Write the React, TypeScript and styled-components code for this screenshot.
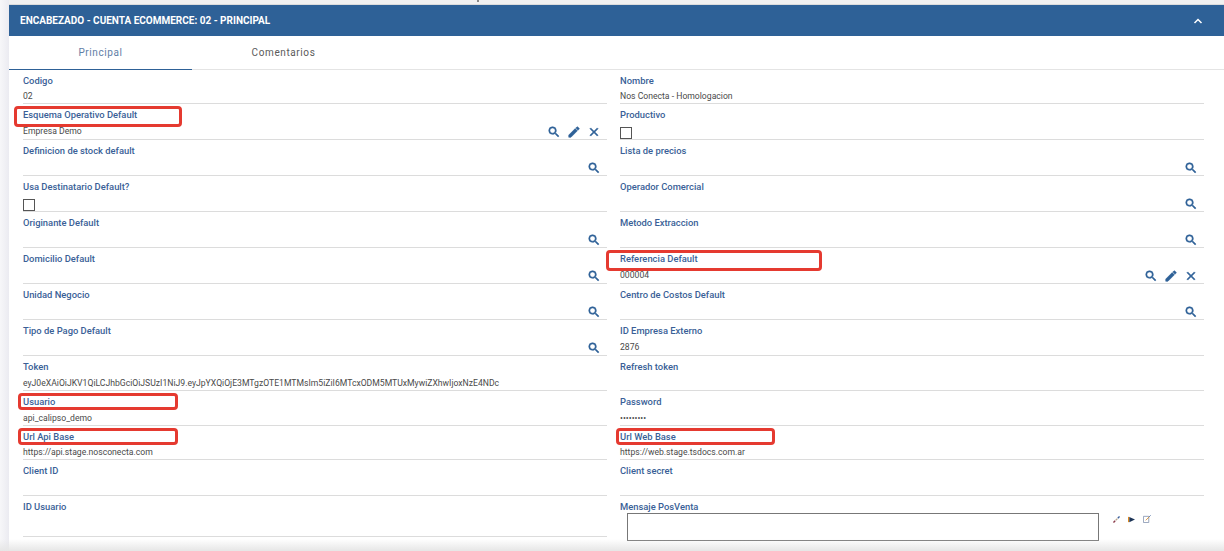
import styled, { createGlobalStyle } from "styled-components";

const GlobalStyle = createGlobalStyle`
  html, body {
    margin: 0;
    height: 100%;
    overflow: hidden;
    background: #f3f3f6;
    font-family: Roboto, "Liberation Sans", sans-serif;
  }
`;

const SEARCH =
  "M15.5 14h-.79l-.28-.27A6.471 6.471 0 0 0 16 9.5 6.5 6.5 0 1 0 9.5 16c1.61 0 3.09-.59 4.23-1.57l.27.28v.79l5 4.99L20.49 19l-4.99-5zm-6 0C7.01 14 5 11.99 5 9.5S7.01 5 9.5 5 14 7.01 14 9.5 11.99 14 9.5 14z";
const EDIT =
  "M3 17.25V21h3.75L17.81 9.94l-3.75-3.75L3 17.25zM20.71 7.04a1 1 0 0 0 0-1.41l-2.34-2.34a1 1 0 0 0-1.41 0l-1.83 1.83 3.75 3.75 1.83-1.83z";
const CLOSE =
  "M19 6.41L17.59 5 12 10.59 6.41 5 5 6.41 10.59 12 5 17.59 6.41 19 12 13.41 17.59 19 19 17.59 13.41 12 19 6.41z";

const Page = styled.div`
  height: 551px;
  padding: 5px 0 0 9px;
  box-sizing: border-box;
  overflow: hidden;
  position: relative;
  background: linear-gradient(90deg, #f7f7f9, #ebebf1 9px, #f1f1f1 9px);
`;

const Tick = styled.span`
  position: absolute;
  left: 477px;
  top: 0;
  width: 2px;
  height: 2px;
  background: #888;
`;

const Panel = styled.section`
  background: #fff;
  height: 100%;
`;

const Header = styled.header`
  height: 31px;
  padding: 0 20px 0 11px;
  background: #2e6197;
  color: #fff;
  display: flex;
  align-items: center;
  justify-content: space-between;
  font-size: 10px;
  font-weight: 700;
  box-shadow: 0 -1px 0 #dcdcdc;
`;

const Tabs = styled.nav`
  display: flex;
  height: 33px;
  border-bottom: 1px solid #e4e4e4;
`;

const Tab = styled.div<{ $active?: boolean }>`
  width: 183px;
  display: flex;
  align-items: center;
  justify-content: center;
  font-size: 10px;
  letter-spacing: 0.6px;
  color: ${(p) => (p.$active ? "#5f7ea6" : "#5a5a5a")};
  box-shadow: ${(p) => (p.$active ? "0 1px 0 #2e6197" : "none")};
`;

const FormGrid = styled.div`
  display: grid;
  grid-template-columns: 584px 584px;
  column-gap: 13px;
  padding-left: 14px;
  grid-template-rows: 34px repeat(7, 36px) 35px 35px 34px 36px 41px;
`;

const Field = styled.div<{ $plain?: boolean }>`
  border-bottom: ${(p) => (p.$plain ? "none" : "1px solid #dcdcdc")};
  box-sizing: border-box;
  padding-top: 5px;
  display: flex;
  flex-direction: column;
  min-width: 0;
`;

const Label = styled.label`
  font-size: 9.4px;
  line-height: 12px;
  font-weight: 500;
  color: #3a5f97;
  position: relative;
  display: block;
`;

const Highlight = styled.span<{ $left: number; $width: number; $height: number }>`
  position: absolute;
  left: ${(p) => p.$left}px;
  top: -3px;
  width: ${(p) => p.$width}px;
  height: ${(p) => p.$height}px;
  border: 3px solid #e53a30;
  border-radius: 4px;
  box-sizing: border-box;
`;

const ValueRow = styled.div`
  display: flex;
  align-items: center;
  justify-content: space-between;
  height: 16px;
  margin-top: 2px;
  font-size: 8.65px;
  color: #4a4a4a;
  white-space: nowrap;
`;

const IconGroup = styled.div`
  display: flex;
  align-items: center;
  gap: 6px;
  margin-left: auto;
  margin-right: 6px;
  padding-top: 1px;
`;

const Check = styled.span`
  width: 12px;
  height: 12px;
  border: 1.5px solid #555;
  box-sizing: border-box;
  display: block;
  margin-top: 6px;
`;

const MessageRow = styled.div`
  display: flex;
  align-items: flex-start;
  margin-left: 7px;
`;

const MessageBox = styled.div`
  width: 472px;
  height: 28px;
  border: 1px solid #777;
  box-sizing: border-box;
`;

const Tools = styled.div`
  display: flex;
  align-items: center;
  gap: 8px;
  margin: 2px 0 0 14px;
`;

const BottomFade = styled.div`
  position: absolute;
  left: 0;
  right: 0;
  bottom: 0;
  height: 12px;
  background: linear-gradient(rgba(232, 232, 232, 0), #e6e6e6);
`;

function Icon({ d, size = 14 }: { d: string; size?: number }) {
  return (
    <svg width={size} height={size} viewBox="0 0 24 24" fill="#2e6197" stroke="#2e6197" strokeWidth={1}>
      <path d={d} />
    </svg>
  );
}

type Item = {
  label: string;
  value?: string;
  check?: boolean;
  search?: boolean;
  actions?: boolean;
  mark?: [number, number, number];
};

const rows: Item[][] = [
  [{ label: "Codigo", value: "02" }, { label: "Nombre", value: "Nos Conecta - Homologacion" }],
  [
    { label: "Esquema Operativo Default", value: "Empresa Demo", actions: true, mark: [-9, 168, 21] },
    { label: "Productivo", check: true },
  ],
  [{ label: "Definicion de stock default", search: true }, { label: "Lista de precios", search: true }],
  [{ label: "Usa Destinatario Default?", check: true }, { label: "Operador Comercial", search: true }],
  [{ label: "Originante Default", search: true }, { label: "Metodo Extraccion", search: true }],
  [
    { label: "Domicilio Default", search: true },
    { label: "Referencia Default", value: "000004", actions: true, mark: [-14, 216, 21] },
  ],
  [{ label: "Unidad Negocio", search: true }, { label: "Centro de Costos Default", search: true }],
  [{ label: "Tipo de Pago Default", search: true }, { label: "ID Empresa Externo", value: "2876" }],
  [
    { label: "Token", value: "eyJ0eXAiOiJKV1QiLCJhbGciOiJSUzI1NiJ9.eyJpYXQiOjE3MTgzOTE1MTMsIm5iZiI6MTcxODM5MTUxMywiZXhwIjoxNzE4NDc" },
    { label: "Refresh token" },
  ],
  [
    { label: "Usuario", value: "api_calipso_demo", mark: [-5, 160, 17] },
    { label: "Password", value: "\u2022\u2022\u2022\u2022\u2022\u2022\u2022\u2022\u2022" },
  ],
  [
    { label: "Url Api Base", value: "https://api.stage.nosconecta.com", mark: [-5, 160, 17] },
    { label: "Url Web Base", value: "https://web.stage.tsdocs.com.ar", mark: [-4, 159, 17] },
  ],
  [{ label: "Client ID" }, { label: "Client secret" }],
];

function FormField({ item }: { item: Item }) {
  return (
    <Field>
      <Label>
        {item.label}
        {item.mark && <Highlight $left={item.mark[0]} $width={item.mark[1]} $height={item.mark[2]} />}
      </Label>
      {item.check ? (
        <Check />
      ) : (
        <ValueRow>
          <span>{item.value}</span>
          {item.search && (
            <IconGroup>
              <Icon d={SEARCH} />
            </IconGroup>
          )}
          {item.actions && (
            <IconGroup>
              <Icon d={SEARCH} />
              <Icon d={EDIT} />
              <Icon d={CLOSE} />
            </IconGroup>
          )}
        </ValueRow>
      )}
    </Field>
  );
}

export default function App() {
  return (
    <Page>
      <GlobalStyle />
      <Tick />
      <Panel>
        <Header>
          <span>ENCABEZADO - CUENTA ECOMMERCE: 02 - PRINCIPAL</span>
          <svg width="12" height="12" viewBox="0 0 24 24" fill="none" stroke="#fff" strokeWidth={3}>
            <path d="M5 16l7-7 7 7" />
          </svg>
        </Header>
        <Tabs>
          <Tab $active>Principal</Tab>
          <Tab>Comentarios</Tab>
        </Tabs>
        <FormGrid>
          {rows.flat().map((item) => (
            <FormField key={item.label} item={item} />
          ))}
          <Field>
            <Label>ID Usuario</Label>
          </Field>
          <Field $plain>
            <Label>Mensaje PosVenta</Label>
            <MessageRow>
              <MessageBox />
              <Tools>
                <svg width="7" height="7" viewBox="0 0 8 8" fill="none" strokeWidth={1.6}>
                  <path d="M3 5L5 3" stroke="#b9a58c" />
                  <path d="M0.5 7.5L2.5 5.5" stroke="#8a3b4a" />
                  <path d="M5.5 2.5L7.5 0.5" stroke="#3b5f9a" />
                </svg>
                <svg width="7" height="7" viewBox="0 0 8 8">
                  <rect x="0" y="1" width="1.5" height="6" fill="#e08a1e" />
                  <path d="M1.5 1L8 4 1.5 7z" fill="#1d3557" />
                </svg>
                <svg width="8" height="8" viewBox="0 0 9 9" fill="none" strokeWidth={1}>
                  <path d="M0.5 1.5h6v7h-6z" stroke="#8c9bb5" />
                  <path d="M3 6l4-4" stroke="#d9933a" />
                  <path d="M7 2l1.5-1.5" stroke="#3b5f9a" />
                </svg>
              </Tools>
            </MessageRow>
          </Field>
        </FormGrid>
      </Panel>
      <BottomFade />
    </Page>
  );
}
